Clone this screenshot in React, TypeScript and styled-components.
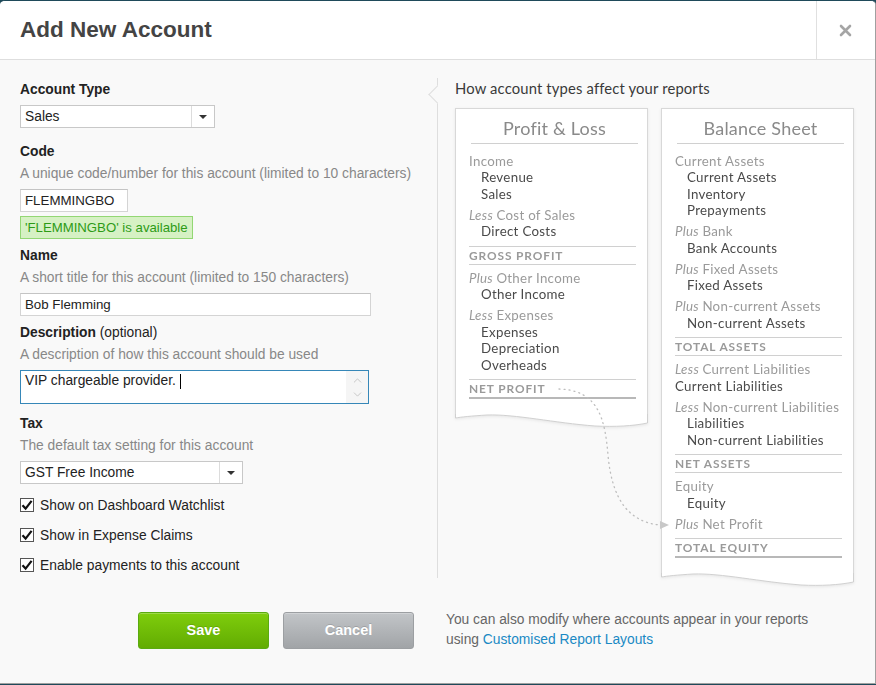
import styled, { createGlobalStyle } from "styled-components";
import { ChevronUp, ChevronDown } from "lucide-react";

type Group = { prefix?: string; head: string; items: string[]; flat?: boolean };
type Block = { groups: Group[]; total: string };
type Report = { title: string; blocks: Block[] };

const profitLoss: Report = {
  title: "Profit & Loss",
  blocks: [
    {
      groups: [
        { head: "Income", items: ["Revenue", "Sales"] },
        { prefix: "Less", head: "Cost of Sales", items: ["Direct Costs"] },
      ],
      total: "GROSS PROFIT",
    },
    {
      groups: [
        { prefix: "Plus", head: "Other Income", items: ["Other Income"] },
        {
          prefix: "Less",
          head: "Expenses",
          items: ["Expenses", "Depreciation", "Overheads"],
        },
      ],
      total: "NET PROFIT",
    },
  ],
};

const balanceSheet: Report = {
  title: "Balance Sheet",
  blocks: [
    {
      groups: [
        {
          head: "Current Assets",
          items: ["Current Assets", "Inventory", "Prepayments"],
        },
        { prefix: "Plus", head: "Bank", items: ["Bank Accounts"] },
        { prefix: "Plus", head: "Fixed Assets", items: ["Fixed Assets"] },
        {
          prefix: "Plus",
          head: "Non-current Assets",
          items: ["Non-current Assets"],
        },
      ],
      total: "TOTAL ASSETS",
    },
    {
      groups: [
        {
          prefix: "Less",
          head: "Current Liabilities",
          items: ["Current Liabilities"],
          flat: true,
        },
        {
          prefix: "Less",
          head: "Non-current Liabilities",
          items: ["Liabilities", "Non-current Liabilities"],
        },
      ],
      total: "NET ASSETS",
    },
    {
      groups: [
        { head: "Equity", items: ["Equity"] },
        { prefix: "Plus", head: "Net Profit", items: [] },
      ],
      total: "TOTAL EQUITY",
    },
  ],
};

const checks = [
  "Show on Dashboard Watchlist",
  "Show in Expense Claims",
  "Enable payments to this account",
];

function ReportSheet({ report }: { report: Report }) {
  return (
    <Card>
      <Sheet>
        <SheetTitle>{report.title}</SheetTitle>
        {report.blocks.map((block, i) => (
          <div key={block.total}>
            <Section>
              {block.groups.map((g) => (
                <div key={g.head}>
                  <GroupHead>
                    {g.prefix && <em>{g.prefix} </em>}
                    {g.head}
                  </GroupHead>
                  {g.items.map((item) => (
                    <Item key={item} $flat={g.flat}>
                      {item}
                    </Item>
                  ))}
                </div>
              ))}
            </Section>
            <Total $last={i === report.blocks.length - 1}>{block.total}</Total>
          </div>
        ))}
      </Sheet>
      <Wave viewBox="0 0 193 14" preserveAspectRatio="none">
        <path
          d="M0,0 H193 V9 C178,12 160,13 140,12 C100,9 60,0 32,1 C16,2 6,3 0,4 Z"
          fill="#fff"
        />
        <path
          d="M0.5,0 V4 C6,3 16,2 32,1 C60,0 100,9 140,12 C160,13 178,12 192.5,9 V0"
          fill="none"
          stroke="#d0d0d0"
          strokeWidth="1"
        />
      </Wave>
    </Card>
  );
}

export default function App() {
  return (
    <>
      <GlobalStyle />
      <Dialog>
        <Header>
          <Title>Add New Account</Title>
          <CloseButton aria-label="Close">
            <svg width="13" height="13" viewBox="0 0 13 13">
              <path
                d="M2 2 L11 11 M11 2 L2 11"
                stroke="#a5a5a5"
                strokeWidth="2.6"
                strokeLinecap="round"
              />
            </svg>
          </CloseButton>
        </Header>

        <Body>
          <FormColumn>
            <Field $top={0}>
              <Label>Account Type</Label>
              <Select $width={195}>
                <span>Sales</span>
                <SelectArrow />
              </Select>
            </Field>

            <Field $top={13}>
              <Label>Code</Label>
              <Help>
                A unique code/number for this account (limited to 10 characters)
              </Help>
              <TextInput $width={108}>FLEMMINGBO</TextInput>
              <Available>'FLEMMINGBO' is available</Available>
            </Field>

            <Field $top={6}>
              <Label>Name</Label>
              <Help>A short title for this account (limited to 150 characters)</Help>
              <TextInput $width={351}>Bob Flemming</TextInput>
            </Field>

            <Field $top={6}>
              <Label>
                Description <Optional>(optional)</Optional>
              </Label>
              <Help>A description of how this account should be used</Help>
              <TextArea>
                <AreaText>
                  VIP chargeable provider.&nbsp;
                  <Caret />
                </AreaText>
                <ScrollTrack>
                  <ChevronUp size={13} strokeWidth={1.5} />
                  <ChevronDown size={13} strokeWidth={1.5} />
                </ScrollTrack>
              </TextArea>
            </Field>

            <Field $top={9}>
              <Label>Tax</Label>
              <Help>The default tax setting for this account</Help>
              <Select $width={223}>
                <span>GST Free Income</span>
                <SelectArrow />
              </Select>
              <CheckList>
                {checks.map((c) => (
                  <CheckRow key={c}>
                    <CheckBox>
                      <svg width="12" height="12" viewBox="0 0 12 12">
                        <path
                          d="M1.5 6.2 L4.6 9.6 L10.6 1.8"
                          fill="none"
                          stroke="#111"
                          strokeWidth="2.2"
                        />
                      </svg>
                    </CheckBox>
                    {c}
                  </CheckRow>
                ))}
              </CheckList>
            </Field>
          </FormColumn>

          <GuideColumn>
            <GuideTitle>How account types affect your reports</GuideTitle>
            <Sheets>
              <ReportSheet report={profitLoss} />
              <ReportSheet report={balanceSheet} />
            </Sheets>
            <FlowArrow viewBox="437 78 439 520">
              <path
                d="M558 389 C598 390, 604 420, 607 455 C611 500, 628 522, 659 525"
                fill="none"
                stroke="#bdbdbd"
                strokeWidth="1.3"
                strokeDasharray="1 4"
                strokeLinecap="round"
              />
              <polygon points="659,521 668,525 659,529" fill="#c8c8c8" />
            </FlowArrow>
          </GuideColumn>
        </Body>

        <Footer>
          <Button $variant="save">Save</Button>
          <Button $variant="cancel">Cancel</Button>
          <FooterNote>
            You can also modify where accounts appear in your reports
            <br />
            using <a href="#">Customised Report Layouts</a>
          </FooterNote>
        </Footer>
      </Dialog>
    </>
  );
}

const GlobalStyle = createGlobalStyle`
  html, body {
    margin: 0;
    padding: 0;
    background: linear-gradient(#1f4a5a 0 10px, #dcdcdc 10px);
  }
  body {
    font-family: "Liberation Sans", Arial, sans-serif;
    font-size: 13.8px;
    color: #333;
  }
  * { box-sizing: border-box; }
`;

const Dialog = styled.div`
  width: 876px;
  height: 684px;
  background: #f9f9f9;
  border-top: 1px solid #1f4a5a;
  border-right: 1px solid #a0a0a0;
  border-bottom: 1px solid #a0a0a0;
  border-radius: 5px 5px 0 0;
  overflow: hidden;
  display: flex;
  flex-direction: column;
`;

const Header = styled.div`
  height: 59px;
  flex: none;
  background: #fff;
  border-bottom: 1px solid #dedede;
  display: flex;
  align-items: center;
  justify-content: space-between;
`;

const Title = styled.h1`
  margin: 0 0 0 20px;
  font-size: 22.5px;
  font-weight: bold;
  color: #444;
`;

const CloseButton = styled.div`
  width: 59px;
  height: 100%;
  border-left: 1px solid #e0e0e0;
  display: flex;
  align-items: center;
  justify-content: center;
  padding-right: 2px;
`;

const Body = styled.div`
  display: grid;
  grid-template-columns: 437px 1fr;
  padding-top: 18px;
  align-items: start;
`;

const FormColumn = styled.div`
  padding: 1px 0 0 20px;
  display: flex;
  flex-direction: column;
`;

const Field = styled.div<{ $top: number }>`
  margin-top: ${(p) => p.$top}px;
  display: flex;
  flex-direction: column;
  align-items: flex-start;
`;

const Label = styled.div`
  font-weight: bold;
  line-height: 22px;
  color: #222;
`;

const Optional = styled.span`
  font-weight: normal;
`;

const Help = styled.div`
  line-height: 22px;
  color: #888;
`;

const Control = styled.div<{ $width: number }>`
  width: ${(p) => p.$width}px;
  height: 23px;
  margin-top: 4px;
  background: #fff;
  border: 1px solid #d4d4d4;
  border-top-color: #c4c4c4;
  display: flex;
  align-items: center;
  color: #222;
`;

const TextInput = styled(Control)`
  padding-left: 4px;
  font-size: 13.3px;
`;

const Select = styled(Control)`
  border-color: #c8c8c8;
  justify-content: space-between;

  span {
    padding-left: 4px;
  }
`;

const SelectArrow = styled.div`
  width: 23px;
  height: 100%;
  border-left: 1px solid #dcdcdc;
  display: flex;
  align-items: center;
  justify-content: center;

  &::after {
    content: "";
    border-left: 4px solid transparent;
    border-right: 4px solid transparent;
    border-top: 4px solid #333;
  }
`;

const Available = styled.div`
  margin-top: 4px;
  height: 23px;
  padding: 0 4px;
  display: flex;
  align-items: center;
  font-size: 13.2px;
  background: #d6f1c4;
  border: 1px solid #93d774;
  color: #2d9b16;
`;

const TextArea = styled.div`
  width: 349px;
  height: 34px;
  margin-top: 4px;
  background: #fff;
  border: 1px solid #3687b8;
  display: flex;
  justify-content: space-between;
`;

const AreaText = styled.div`
  padding: 2px 0 0 4px;
  line-height: 16px;
  color: #222;
  display: flex;
  align-items: flex-start;
`;

const Caret = styled.span`
  display: inline-block;
  width: 1px;
  height: 15px;
  margin-top: 1px;
  background: #000;
`;

const ScrollTrack = styled.div`
  width: 22px;
  background: #f5f5f5;
  color: #bdbdbd;
  display: flex;
  flex-direction: column;
  align-items: center;
  justify-content: center;
  gap: 1px;
`;

const CheckList = styled.div`
  margin-top: 10px;
  display: flex;
  flex-direction: column;
  gap: 8px;
`;

const CheckRow = styled.label`
  display: flex;
  align-items: center;
  gap: 6px;
  height: 22px;
  color: #222;
`;

const CheckBox = styled.span`
  width: 14px;
  height: 14px;
  border: 1px solid #555;
  background: #fff;
  display: flex;
  align-items: center;
  justify-content: center;
`;

const GuideColumn = styled.div`
  position: relative;
  height: 500px;
  padding-left: 17px;
  border-left: 1px solid #dedede;

  &::before {
    content: "";
    position: absolute;
    left: -7px;
    top: 10px;
    width: 12px;
    height: 12px;
    background: #f9f9f9;
    border-left: 1px solid #dedede;
    border-bottom: 1px solid #dedede;
    transform: rotate(45deg);
  }
`;

const GuideTitle = styled.div`
  font-family: Lato, "Liberation Sans", sans-serif;
  font-size: 14.8px;
  line-height: 20px;
  color: #3a3a3a;
  letter-spacing: 0.15px;
`;

const Sheets = styled.div`
  margin-top: 10px;
  display: flex;
  align-items: flex-start;
  gap: 13px;
`;

const Card = styled.div`
  width: 193px;
  filter: drop-shadow(0 1px 1.5px rgba(0, 0, 0, 0.08));
`;

const Sheet = styled.div`
  background: #fff;
  border: 1px solid #d8d8d8;
  border-bottom: none;
  padding: 0 11px 16px 13px;
  font-family: Lato, "Liberation Sans", sans-serif;
  font-size: 13.3px;
  letter-spacing: 0.3px;
`;

const Wave = styled.svg`
  display: block;
  width: 193px;
  height: 14px;
  margin-top: -1px;
`;

const SheetTitle = styled.div`
  padding: 8px 0 4px;
  margin: 0 -2px 3.5px 2px;
  line-height: 22px;
  font-size: 18px;
  letter-spacing: 0.2px;
  text-align: center;
  color: #8a8a8a;
  border-bottom: 1px solid #d0d0d0;
`;

const Section = styled.div`
  padding: 5px 0 6px;
  display: flex;
  flex-direction: column;
  gap: 4.5px;
`;

const GroupHead = styled.div`
  line-height: 16.5px;
  color: #9a9a9a;

  em {
    font-style: italic;
  }
`;

const Item = styled.div<{ $flat?: boolean }>`
  line-height: 16.5px;
  padding-left: ${(p) => (p.$flat ? 0 : 12)}px;
  color: #4a4a4a;
`;

const Total = styled.div<{ $last?: boolean }>`
  line-height: 17px;
  border-top: 1px solid #d0d0d0;
  border-bottom: ${(p) => (p.$last ? "2px solid #b8b8b8" : "1px solid #d0d0d0")};
  font-size: 11.9px;
  font-weight: bold;
  letter-spacing: 0.9px;
  color: #9a9a9a;
`;

const FlowArrow = styled.svg`
  position: absolute;
  left: 0;
  top: 0;
  width: 439px;
  height: 520px;
  pointer-events: none;
`;

const Footer = styled.div`
  padding: 32px 0 0 138px;
  display: flex;
  align-items: center;
  gap: 14px;
`;

const Button = styled.button<{ $variant: "save" | "cancel" }>`
  width: 131px;
  height: 37px;
  border-radius: 3px;
  font-family: "Liberation Sans", Arial, sans-serif;
  font-size: 14.5px;
  font-weight: bold;
  color: #fff;
  text-shadow: 0 -1px 0 rgba(0, 0, 0, 0.15);
  border: 1px solid
    ${(p) => (p.$variant === "save" ? "#5aab10" : "#9c9fa2")};
  background: ${(p) =>
    p.$variant === "save"
      ? "linear-gradient(#7fcd0c, #62ac02)"
      : "linear-gradient(#c2c5c8, #a1a4a7)"};
  box-shadow: inset 0 1px 0 rgba(255, 255, 255, 0.25);
`;

const FooterNote = styled.div`
  margin-left: 18px;
  line-height: 20px;
  color: #666;

  a {
    color: #1a89c4;
    text-decoration: none;
  }
`;
